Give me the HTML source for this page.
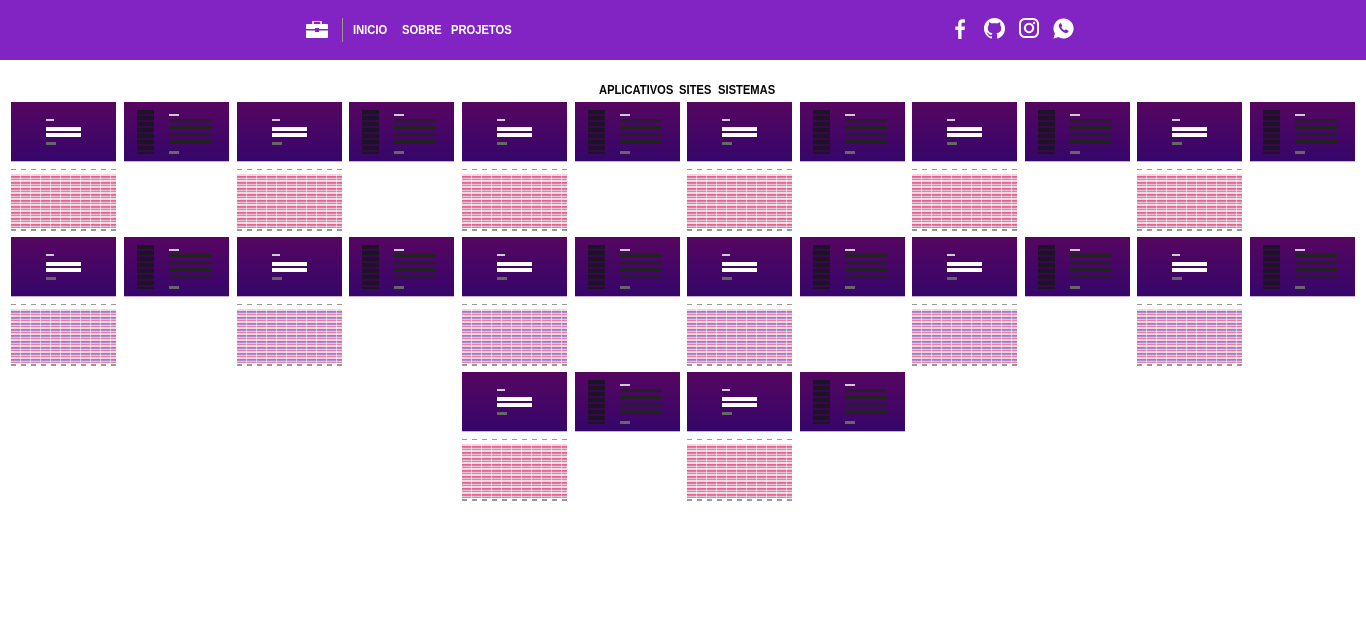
<!DOCTYPE html>
<html><head><meta charset="utf-8"><style>
*{margin:0;padding:0;box-sizing:border-box}
body{width:1366px;height:640px;background:#fff;font-family:"Liberation Sans",sans-serif;position:relative;overflow:hidden}
.hdr{position:absolute;left:0;top:0;width:1366px;height:60px;background:#8224c4}
.nav,.tab{position:absolute;font-size:13px;font-weight:bold;transform-origin:0 0;transform:scaleX(0.86);white-space:nowrap}
.nav{top:22px;color:#fff}
.tab{top:82px;color:#000}
.sep{position:absolute;left:342px;top:18px;width:1px;height:24px;background:#9a9a80}
.t{position:absolute;width:105px;height:60px;background:linear-gradient(#560660,#36066a);border-bottom:1px solid #c8b0d8}
.l .ttl{position:absolute;left:35px;top:17px;width:8px;height:2px;background:#ccc}
.l .i1,.l .i2{position:absolute;left:35px;width:35px;height:4px;background:#fff}
.l .i1{top:25px}.l .i2{top:31px}
.l .b{position:absolute;left:35px;top:40px;width:10px;height:3px;background:#666}
.f .side{position:absolute;left:13px;top:8px;width:17px;height:44px;background:repeating-linear-gradient(#1c1424 0 4px,#3a0650 4px 6px)}
.f .ttl{position:absolute;left:45px;top:12px;width:10px;height:2px;background:#ccc}
.f .r{position:absolute;left:45px;width:42px;height:3px;background:#222}
.f .b{position:absolute;left:45px;top:49px;width:10px;height:3px;background:#666}
.tb{position:absolute;width:105px;height:54px;background:
repeating-linear-gradient(90deg,transparent 0 9px,rgba(255,255,255,.5) 9px 10px),
repeating-linear-gradient(#f0d8e0 0 2px,#e86090 2px 3px,#a890d8 3px 4px,#d8c8d8 4px 5px,#ee7aa0 5px 6px);}
.tb:before{content:"";position:absolute;left:0;top:-5px;width:105px;height:1px;background:repeating-linear-gradient(90deg,#999 0 5px,#fff 5px 10px)}
.tb:after{content:"";position:absolute;left:0;bottom:-3px;width:105px;height:2px;background:repeating-linear-gradient(90deg,#999 0 5px,#fff 5px 10px)}
</style></head><body>
<div class="hdr">
<svg style="position:absolute;left:306px;top:21px" width="22" height="17" viewBox="0 0 22 17"><rect x="7" y="0" width="8" height="4" fill="none" stroke="#fff" stroke-width="1.5"/><rect x="0" y="3" width="22" height="14" rx="1" fill="#fff"/><rect x="0" y="8" width="22" height="1.5" fill="#8224c4"/><rect x="9" y="7" width="4" height="4" fill="#8224c4"/></svg>
<div class="sep"></div>
<div class="nav" style="left:353px">INICIO</div>
<div class="nav" style="left:402px">SOBRE</div>
<div class="nav" style="left:451px">PROJETOS</div>
<svg style="position:absolute;left:953px;top:19px" width="14" height="20" viewBox="0 0 10 20"><path d="M6.5 20V11h3l.5-3.5H6.5V5.3c0-1 .3-1.7 1.8-1.7H10V.5C9.6.4 8.6.3 7.4.3 4.9.3 3.2 1.8 3.2 4.6v2.9H.3V11h2.9v9z" fill="#fff"/></svg>
<svg style="position:absolute;left:984px;top:18px" width="21" height="21" viewBox="0 0 16 16"><path fill="#fff" d="M8 0C3.58 0 0 3.58 0 8c0 3.54 2.29 6.530 5.47 7.59.4.07.55-.17.55-.38v-1.33c-2.230.48-2.7-1.07-2.7-1.07-.36-.92-.89-1.17-.89-1.17-.73-.5.05-.49.05-.49.8.06 1.23.83 1.23.83.72 1.22 1.87.87 2.33.66.07-.52.28-.87.5-1.07-1.78-.2-3.64-.89-3.64-3.95 0-.87.31-1.59.82-2.15-.08-.2-.36-1.02.08-2.12 0 0 .67-.21 2.2.82a7.6 7.6 0 014 0c1.53-1.04 2.2-.82 2.2-.82.44 1.1.16 1.92.08 2.12.51.56.82 1.27.82 2.15 0 3.07-1.87 3.75-3.65 3.95.29.25.54.73.54 1.48v2.2c0 .21.15.46.55.38A8 8 0 0016 8c0-4.42-3.58-8-8-8z"/></svg>
<svg style="position:absolute;left:1019px;top:18px" width="20" height="20" viewBox="0 0 20 20"><rect x="1" y="1" width="18" height="18" rx="5" fill="none" stroke="#fff" stroke-width="2"/><circle cx="10" cy="10" r="4.2" fill="none" stroke="#fff" stroke-width="2"/><circle cx="15" cy="5" r="1.2" fill="#fff"/></svg>
<svg style="position:absolute;left:1053px;top:18px" width="21" height="21" viewBox="0 0 20 20"><path fill="#fff" d="M10 0.5A9.5 9.5 0 0 0 1.8 14.8L.5 19.5l4.8-1.3A9.5 9.5 0 1 0 10 .5z"/><path fill="#8224c4" d="M6.5 5.2c.4-.4 1-.4 1.2 0l1 2c.2.4 0 .7-.3 1l-.5.5c.6 1.4 1.7 2.5 3.1 3.1l.5-.5c.3-.3.6-.5 1-.3l2 1c.4.2.4.8 0 1.2-.8 1-2 1.3-3.2.8-2.6-1-4.6-3-5.6-5.6-.4-1.200-.1-2.4.8-3.2z"/></svg>
</div>
<div class="tab" style="left:599px">APLICATIVOS</div>
<div class="tab" style="left:679px">SITES</div>
<div class="tab" style="left:718px">SISTEMAS</div>
<div id="g"></div>
<script>
var xs=[11,124,237,349,462,575,687,800,912,1025,1137,1250];
var ys=[102,237,372];
var h='';
var L='<div class="ttl"></div><div class="i1"></div><div class="i2"></div><div class="b"></div>';
var F='<div class="side"></div><div class="ttl"></div><div class="r" style="top:17px"></div><div class="r" style="top:24px"></div><div class="r" style="top:31px"></div><div class="r" style="top:38px"></div><div class="b"></div>';
for(var r=0;r<3;r++){for(var c=0;c<12;c++){if(r==2&&(c<4||c>7))continue;var x=xs[c],y=ys[r];
if(c%2==0){h+='<div class="t l" style="left:'+x+'px;top:'+y+'px">'+L+'</div><div class="tb" style="left:'+x+'px;top:'+(y+72)+'px"></div>';}
else{h+='<div class="t f" style="left:'+x+'px;top:'+y+'px">'+F+'</div>';}}}
document.getElementById('g').innerHTML=h;
</script>
</body></html>
